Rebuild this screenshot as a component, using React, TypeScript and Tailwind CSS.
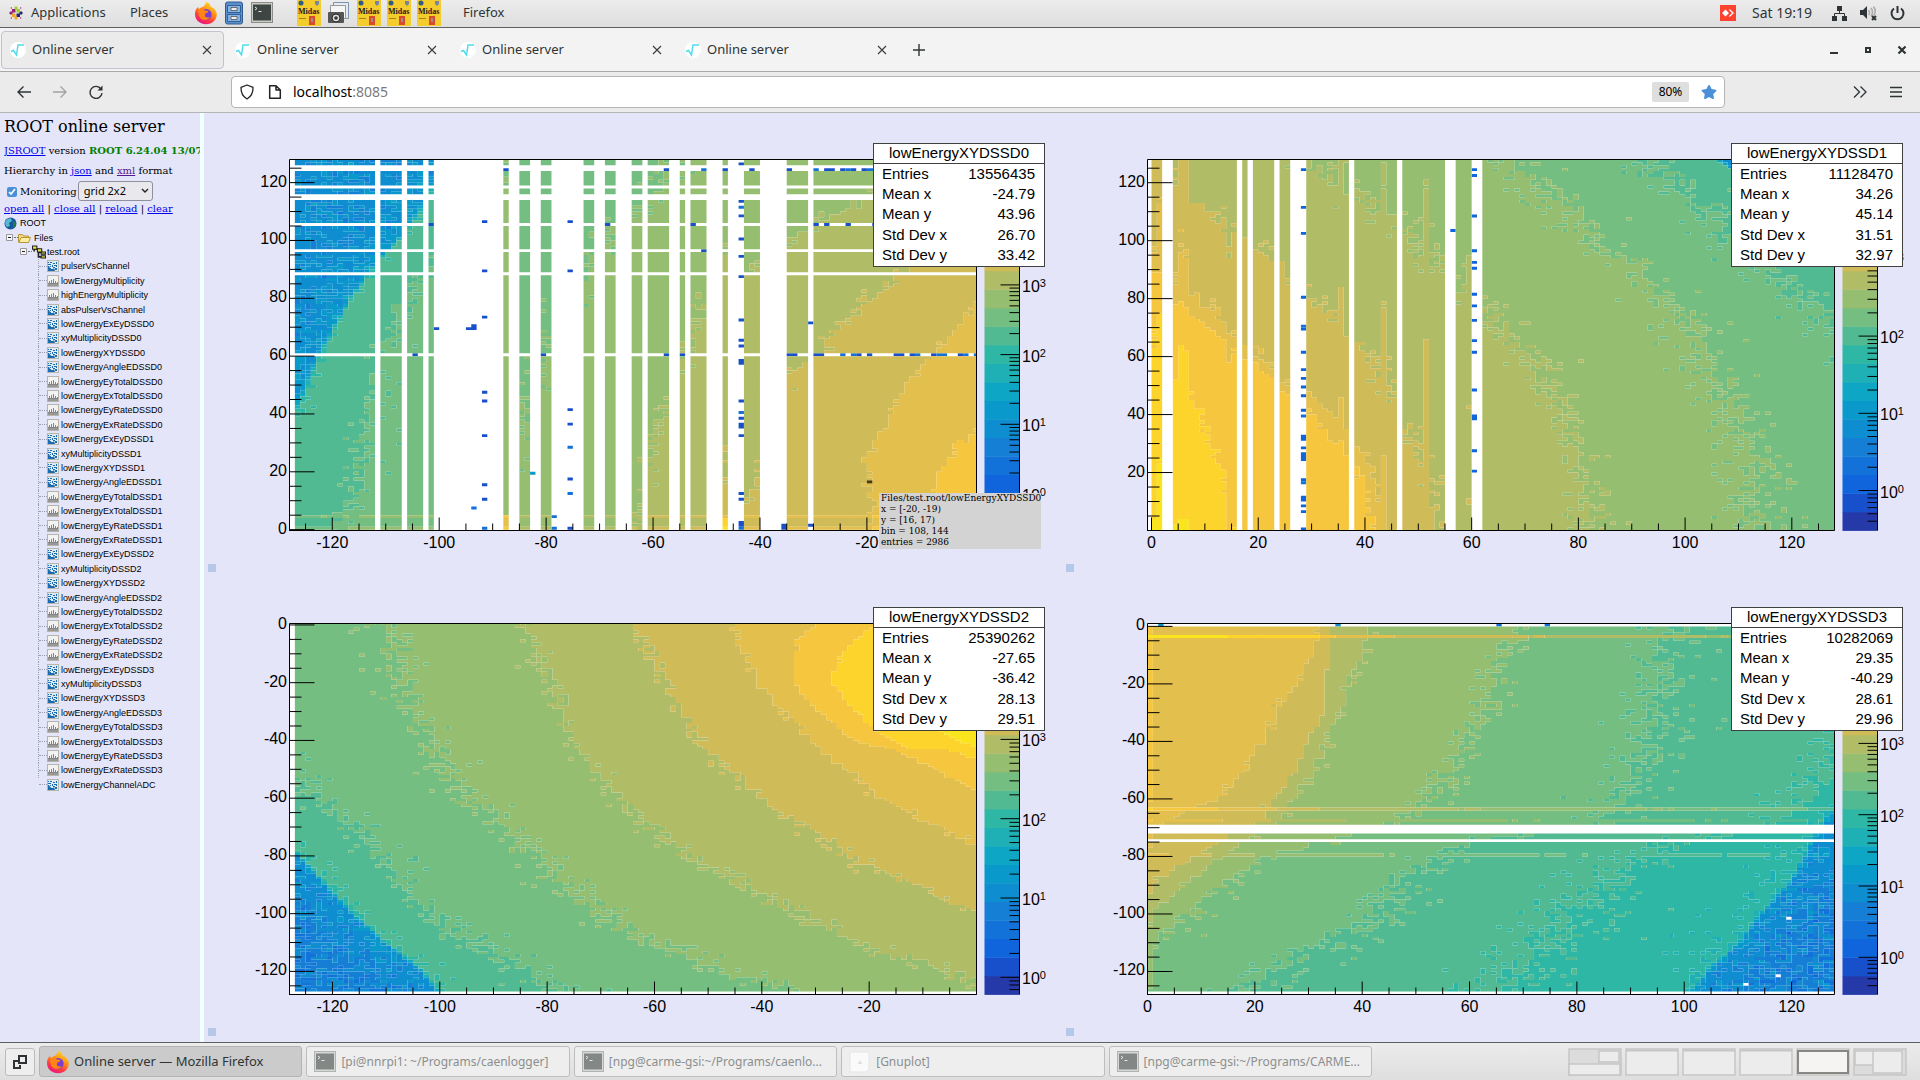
import React from "react";
import { FaStar } from "react-icons/fa";

type Curve = [number, [number, number][]];

type Plot = {
  name: string;
  stats: [string, string][];
  x: [number, number];
  y: [number, number];
  // pixel position of 10^0 on the palette and the height of one decade
  z: [number, number];
  curves: Curve[];
  blank: (x: number, y: number) => boolean;
  boost: (x: number, y: number) => number;
  dots: [number, number, number][];
};

const COLORS = [
  "#2639a8", "#1850cb", "#1064dc", "#1372d9", "#157fd5", "#0f8dd1", "#0999cb",
  "#0da6c4", "#1eb0b4", "#2eb7a4", "#52ba93", "#74be81", "#96be70", "#b1bd66",
  "#d0bb59", "#e3bf4d", "#f6c63e", "#fdd42c", "#fae41d", "#f9fb0e",
];

// drawing frame inside one pad
const LEFT = 85.5;
const RIGHT = 772.5;
const TOP = 45.5;
const BOTTOM = 416.5;
const BAND = (BOTTOM - TOP) / 20;

const shift = (pts: [number, number][], d: number) =>
  pts.map(([y, x]) => [y, x + d] as [number, number]);

const column = (x: number, level: number, ys: number[]) =>
  ys.map((y) => [x, y, level] as [number, number, number]);
const row = (y: number, level: number, xs: number[]) =>
  xs.map((x) => [x, y, level] as [number, number, number]);

const edge0: [number, number][] = [[0, -140], [36, -129], [46, -126], [60, -123], [70, -120], [80, -117], [90, -113], [100, -108], [110, -104], [128, -99]];
const edge1: [number, number][] = [[0, 190], [60, 150], [92, 130], [120, 113], [128, 106]];
const edge2: [number, number][] = [[-127, -101], [-120, -104], [-110, -111], [-100, -117], [-90, -122], [-80, -127], [0, -180]];
const edge3: [number, number][] = [[-127, 101], [-120, 104], [-110, 110], [-100, 114], [-90, 119], [-80, 122], [-70, 125], [-60, 129], [0, 170]];

const skipX0 = [-128, -112, -107, -103, -87, -86, -83, -82, -71, -70, -67, -66, -65, -62, -57, -56, -54, -50, -49, -48, -46, -45, -44, -40, -39, -38, -37, -36, -31];
const skipY0 = [124, 125, 118, 114, 115, 105, 96, 88, 60];
const skipX1 = [-1, 2, 3, 16, 18, 23, 26, 27, 28, 37, 46, 55, 56, 60, 61];
const skipY3 = [0, -70, -71, -72, -75, -128];

const plots: Plot[] = [
  {
    name: "lowEnergyXYDSSD0",
    stats: [["Entries", "13556435"], ["Mean x", "-24.79"], ["Mean y", "43.96"], ["Std Dev x", "26.70"], ["Std Dev y", "33.42"]],
    x: [-128, 0.5],
    y: [-0.3, 128],
    z: [380, 69.7],
    curves: [
      [5.5, shift(edge0, -8)],
      [6.2, edge0],
      [10.1, shift(edge0, 1)],
      [11, [[0, -118], [20, -115], [45, -113], [60, -112], [70, -109], [80, -107], [88, -103], [100, -98], [128, -90]]],
      [12, [[0, -90], [40, -85], [60, -79], [80, -74], [100, -69], [110, -64], [120, -58], [128, -54]]],
      [13, [[0, -63], [30, -60], [60, -54], [80, -50], [90, -42], [100, -34], [110, -24], [120, -14], [128, -5]]],
      [14, [[0, -45], [20, -40], [40, -37], [55, -34], [60, -29], [70, -25], [80, -19], [86, -15], [105, 0], [128, 12]]],
      [15, [[0, -19], [8, -19], [23, -20], [34, -17], [46, -14], [57, -9], [74, -1], [90, 5], [128, 18]]],
      [16, [[0, -7], [18, -7], [23, -5], [29, -3], [33, 0], [60, 8], [128, 25]]],
    ],
    blank: (x, y) => skipX0.includes(x) || (x >= -101 && x <= -89) || (x >= -79 && x <= -74) || skipY0.includes(y),
    boost: (x, y) =>
      (y === 4 || y === 0 ? 1 : 0) +
      (x === -88 ? (y < 5 ? 3.8 : 0.9) : 0) +
      (x === -47 ? (y < 4 ? 4 : 0.3) : 0),
    dots: [
      ...column(-92, 1, [106, 89, 73, 47, 44, 32, 15, 10]),
      ...column(-76, 1, [106, 89, 41, 36, 17, 0]),
      ...column(-76, 3, [28, 12]),
      ...column(-94, 1, [69, 70]),
      ...column(-79, 3, [4, 0]),
      ...column(-44, 1, [126, 113, 108, 100, 94, 87, 72, 65, 63, 58, 57, 44, 38, 36, 35, 32, 12, 10, 2, 1]),
      ...column(-44, 3, [111, 40, 0]),
      ...column(-36, 1, [0, 1]),
      ...column(-31, 1, [71, 1]),
      ...row(124, 1, [-88, -58, -47, -42, -35, -28, -27, -25, -23, -21]),
      ...row(124, 3, [-51, -30, -24, -20, -19]),
      ...row(105, 1, [-102, -69, -53, -30, -28, -24, -19]),
      ...row(60, 1, [-105, -81, -58, -55, -35, -34, -30, -29, -22, -20, -15, -14, -12, -8, -3]),
      ...row(60, 3, [-25, -23, -11, -7, -6, -2, 0]),
      [-95, 69, 1], [-101, 69, 1], [-94, 7, 3], [-92, 0, 3], [-83, 19, 6], [-51, 96, 1],
    ],
  },
  {
    name: "lowEnergyXYDSSD1",
    stats: [["Entries", "11128470"], ["Mean x", "34.26"], ["Mean y", "45.14"], ["Std Dev x", "31.51"], ["Std Dev y", "32.97"]],
    x: [-0.75, 128],
    y: [0, 128],
    z: [376.5, 77.2],
    curves: [
      [18, [[0, 6], [3, 3], [5, -4], [128, -40]]],
      [17, [[0, 15], [20, 13.5], [30, 11], [40, 9], [50, 5.5], [55, 3], [70, 0], [128, -30]]],
      [16, [[0, 42], [10, 41], [20, 39.5], [30, 34.5], [40, 30], [46, 26], [55, 21], [60, 17], [68, 12], [75, 6], [80, 3], [90, 0], [128, -20]]],
      [15, [[0, 43.5], [15, 42], [25, 40], [35, 36], [45, 31], [50, 25], [57, 22], [62, 18], [70, 14], [75, 11], [80, 8], [85, 4], [95, 0], [128, -10]]],
      [14, [[0, 53], [10, 52], [20, 51], [30, 49], [35, 47], [45, 44.5], [50, 43], [60, 41], [65, 38], [72, 34], [80, 30], [85, 26], [95, 22], [100, 17], [105, 13], [115, 7], [120, 4], [128, 1]]],
      [13, [[0, 82], [20, 81], [30, 79], [40, 77], [55, 73], [60, 71], [65, 67], [75, 63], [80, 60], [85, 57], [90, 54], [100, 49], [105, 47], [112, 43], [115, 39], [120, 34], [128, 28]]],
      [12, [[0, 112], [20, 112], [30, 111], [40, 109], [50, 106], [60, 104], [70, 101], [80, 96], [85, 94], [90, 91], [95, 87], [100, 83], [110, 80], [115, 75], [120, 71], [128, 66]]],
      [10.4, shift(edge1, -1)],
      [6, edge1],
    ],
    blank: (x) => skipX1.includes(x),
    boost: (x) => ({ 1: 0.5, 5: 0.3, 6: 0.3, 14: -0.3, 35: 0.3, 43: 0.35, 51: 0.45, 59: 0.2 } as Record<number, number>)[x] ?? 0,
    dots: [
      ...column(28, 2, [124, 111, 102, 80, 69, 61, 55, 52, 49, 46, 41, 32, 31, 28, 26, 25, 24, 17, 11, 10, 8, 6, 0]),
      ...column(28, 3, [70, 39, 16]),
      ...column(60, 2, [124, 122, 108, 96, 92, 90, 81, 77, 72, 65, 61, 48, 39, 38, 27, 20]),
      [56, 103, 2],
    ],
  },
  {
    name: "lowEnergyXYDSSD2",
    stats: [["Entries", "25390262"], ["Mean x", "-27.65"], ["Mean y", "-36.42"], ["Std Dev x", "28.13"], ["Std Dev y", "29.51"]],
    x: [-128, 0],
    y: [-128, 0.5],
    z: [399.3, 79.3],
    curves: [
      [4.6, shift(edge2, -14)],
      [5.7, edge2],
      [10, shift(edge2, 1)],
      [11, [[-127, -79], [-120, -86], [-110, -96], [-100, -103], [-90, -107], [-80, -112], [-70, -117], [-60, -123], [-50, -128], [0, -150]]],
      [12, [[-127, -34], [-120, -47], [-110, -61], [-100, -70], [-80, -82], [-60, -95], [-40, -102], [-20, -107], [0, -110]]],
      [13, [[-127, 4], [-120, -6], [-110, -23], [-100, -34], [-80, -54], [-60, -67], [-40, -75], [-20, -79], [0, -84]]],
      [14, [[-127, 35], [-110, 13], [-100, 0], [-90, -12], [-80, -24], [-60, -41], [-40, -52], [-20, -58], [0, -63]]],
      [15, [[-127, 60], [-100, 26], [-77, 0], [-60, -18], [-40, -31], [-20, -41], [-8, -44], [0, -45]]],
      [16, [[-127, 80], [-80, 26], [-58, 0], [-45, -14], [-40, -23], [-30, -30], [-20, -34], [-5, -33], [0, -30]]],
      [17, [[-127, 90], [-60, 26], [-44, -5], [-43, -13], [-38, -18], [-30, -23], [-20, -27], [-10, -25], [-5, -22], [0, -18]]],
      [18, [[-127, 95], [-60, 36], [-43, 0], [-39, -5], [-35, -9], [-20, -12], [0, -5]]],
    ],
    blank: (x, y) => x === -128 || y === -128,
    boost: () => 0,
    dots: [],
  },
  {
    name: "lowEnergyXYDSSD3",
    stats: [["Entries", "10282069"], ["Mean x", "29.35"], ["Mean y", "-40.29"], ["Std Dev x", "28.61"], ["Std Dev y", "29.96"]],
    x: [0, 128],
    y: [-128, 1],
    z: [379.3, 71.3],
    curves: [
      [15, [[-127, -50], [-80, -8], [-68, 4], [-60, 14], [-50, 18], [-40, 22], [-30, 24], [-20, 28], [-10, 31], [0, 32]]],
      [14, [[-127, -30], [-100, -8], [-90, 1], [-85, 5], [-80, 9], [-75, 14], [-68, 21], [-60, 24], [-50, 28], [-40, 30], [-30, 33], [0, 34]]],
      [13, [[-127, -20], [-110, -6], [-100, 1], [-90, 7], [-80, 14], [-75, 18], [-70, 24], [-60, 27], [-50, 31], [-40, 33], [-30, 35], [-20, 37], [-10, 40], [0, 42]]],
      [12, [[-127, -12], [-110, 1], [-100, 7], [-90, 14], [-80, 22], [-75, 33], [-68, 46], [-60, 52], [-50, 56], [-40, 59], [-30, 62], [-20, 64], [-10, 66], [0, 69]]],
      [11, [[-127, 19], [-120, 22], [-110, 33], [-105, 39], [-100, 43], [-90, 46], [-80, 53], [-75, 63], [-70, 82], [-60, 88], [-50, 92], [-40, 93], [-20, 95], [0, 97]]],
      [10, [[-127, 64], [-120, 69], [-110, 75], [-100, 78], [-90, 85], [-80, 91], [-75, 101], [-70, 116], [-60, 124], [-50, 128], [-40, 132], [0, 140]]],
      [9.1, edge3],
      [5.8, shift(edge3, 1)],
      [4.6, shift(edge3, 12)],
    ],
    blank: (_x, y) => skipY3.includes(y),
    boost: (x, y) =>
      (({ "-4": 2.2, "-64": 1.3, "-68": 0.6, "-80": 0.7 } as Record<string, number>)[y] ?? 0) +
      (x === 0 ? 0.4 : 0),
    dots: [
      [2, 0, 6], [35, 0, 5], [65, 0, 3], [74, 0, 3],
      [119, -102, -1], [117, -122, -1], [111, -125, -1],
    ],
  },
];

const hash = (a: number, b: number, c: number) => {
  let h = (a * 374761393 + b * 668265263 + c * 1442695041) | 0;
  h = Math.imul(h ^ (h >>> 13), 1274126177);
  h = Math.imul(h ^ (h >>> 16), 2246822519);
  return ((h ^ (h >>> 15)) >>> 0) / 4294967296;
};

const gauss = (x: number, y: number, seed: number) =>
  Math.sqrt(-2 * Math.log(hash(x, y, seed) + 1e-9)) *
  Math.cos(2 * Math.PI * hash(x, y, seed + 50));

const interpolate = (pts: [number, number][], v: number) => {
  if (v <= pts[0][0]) return pts[0][1];
  for (let i = 1; i < pts.length; i++) {
    if (v <= pts[i][0]) {
      const [a, b] = [pts[i - 1], pts[i]];
      return a[1] + ((b[1] - a[1]) * (v - a[0])) / (b[0] - a[0]);
    }
  }
  return pts[pts.length - 1][1];
};

const cellPaths = (plot: Plot, seed: number) => {
  const sx = (RIGHT - LEFT) / (plot.x[1] - plot.x[0]);
  const sy = (BOTTOM - TOP) / (plot.y[1] - plot.y[0]);
  const px = (x: number) => Math.min(RIGHT, Math.max(LEFT, LEFT + (x - plot.x[0]) * sx));
  const py = (y: number) => Math.min(BOTTOM, Math.max(TOP, BOTTOM - (y - plot.y[0]) * sy));
  const paths: string[] = COLORS.map(() => "");
  const special = new Map(plot.dots.map(([x, y, l]) => [`${x},${y}`, l]));
  const perBand = BAND / plot.z[1];
  const zMin = (plot.z[0] - BOTTOM) / plot.z[1];

  const levelAt = (x: number, y: number) => {
    const dot = special.get(`${x},${y}`);
    if (dot !== undefined) return dot;
    if (plot.blank(x, y)) return -1;
    const cx = x + 0.5;
    const at = plot.curves.map(([v, pts]) => [interpolate(pts, y), v]);
    const last = at.length - 1;
    let v = cx <= at[0][0] ? at[0][1] : at[last][1];
    if (cx <= at[0][0] && at[0][1] > 14) v += Math.min(0.9, (at[0][0] - cx) / 20);
    if (cx > at[last][0] && at[last][1] > 14) v += Math.min(0.9, (cx - at[last][0]) / 20);
    for (let i = 0; i < last; i++) {
      if (cx > at[i][0] && cx <= at[i + 1][0]) {
        v = at[i][1] + ((at[i + 1][1] - at[i][1]) * (cx - at[i][0])) / (at[i + 1][0] - at[i][0]);
      }
    }
    v += plot.boost(x, y);
    const entries = Math.pow(10, zMin + v * perBand);
    v += (gauss(x, y, seed) * 0.434) / Math.sqrt(entries) / perBand;
    return Math.max(1, Math.min(19, Math.floor(v)));
  };

  for (let x = Math.floor(plot.x[0]); x < plot.x[1]; x++) {
    let start = Math.floor(plot.y[0]);
    let current = levelAt(x, start);
    for (let y = start + 1; y <= plot.y[1] + 1; y++) {
      const next = y < plot.y[1] ? levelAt(x, y) : -2;
      if (next === current) continue;
      if (current >= 0) {
        const x1 = px(x).toFixed(2);
        const x2 = px(x + 1).toFixed(2);
        const y1 = py(start).toFixed(2);
        const y2 = py(y).toFixed(2);
        paths[current] += `M${x1} ${y1}H${x2}V${y2}H${x1}Z`;
      }
      start = y;
      current = next;
      if (next === -2) break;
    }
  }
  return paths;
};

const range = (from: number, to: number, step: number) => {
  const out: number[] = [];
  for (let v = Math.ceil(from / step) * step; v <= to; v += step) out.push(v);
  return out;
};

const Pad: React.FC<{ plot: Plot; seed: number; children?: React.ReactNode }> = ({ plot, seed, children }) => {
  const px = (x: number) => LEFT + ((x - plot.x[0]) * (RIGHT - LEFT)) / (plot.x[1] - plot.x[0]);
  const py = (y: number) => BOTTOM - ((y - plot.y[0]) * (BOTTOM - TOP)) / (plot.y[1] - plot.y[0]);
  const decades = [0, 1, 2, 3, 4, 5].filter((d) => plot.z[0] - d * plot.z[1] > TOP);
  let ticks = "";
  range(plot.x[0], plot.x[1], 5).forEach((x) => {
    ticks += `M${px(x)} ${BOTTOM}v${x % 20 === 0 ? -13 : -7}`;
  });
  range(plot.y[0], plot.y[1], 5).forEach((y) => {
    ticks += `M${LEFT} ${py(y)}h${y % 20 === 0 ? 25 : 12}`;
  });
  [-1, ...decades].forEach((d) => {
    for (let m = 1; m < 10; m++) {
      const y = plot.z[0] - (d + Math.log10(m)) * plot.z[1];
      if (y < BOTTOM && y > TOP) ticks += `M815.5 ${y}h${m === 1 ? -19 : -10}`;
    }
  });

  return (
    <section className="relative">
      <svg viewBox="0 0 858 464" className="block w-full h-auto font-['Liberation_Sans',Arial,sans-serif]" role="img" aria-label={plot.name}>
        <rect x={LEFT} y={TOP} width={RIGHT - LEFT} height={BOTTOM - TOP} fill="white" />
        {cellPaths(plot, seed).map((d, i) => d && <path key={i} d={d} fill={COLORS[i]} />)}
        {seed === 1 && <rect x={px(-20)} y={py(17)} width="5.4" height="2.9" fill="#4a3c16" />}
        <path d={`M${LEFT} ${BOTTOM + 0.5}V${TOP}H${RIGHT}V${BOTTOM}H${LEFT}`} fill="none" stroke="black" />
        {COLORS.map((c, i) => (
          <rect key={c} x="780.5" y={BOTTOM - (i + 1) * BAND} width="35" height={BAND + 0.4} fill={c} />
        ))}
        <path d={`M815.5 ${TOP}V${BOTTOM}`} stroke="black" />
        <path d={ticks} fill="none" stroke="black" />
        {range(plot.x[0], plot.x[1], 20).filter((x) => x !== 0 || plot.x[0] > -2).map((x) => (
          <text key={x} x={px(x)} y="434" fontSize="16" textAnchor="middle">{x === 0 ? 0 : x}</text>
        ))}
        {range(plot.y[0], plot.y[1], 20).filter((y) => y !== 0 || seed !== 2).map((y) => (
          <text key={y} x="83" y={py(y) + 4} fontSize="16" textAnchor="end">{y === 0 ? 0 : y}</text>
        ))}
        {decades.filter((d) => d < 4).map((d) => (
          <text key={d} x="818" y={plot.z[0] - d * plot.z[1] + 7} fontSize="16">
            10<tspan dy="-5" fontSize="11">{d}</tspan>
          </text>
        ))}
        <rect x="4" y="450" width="8" height="8" fill="#b5c8e8" />
      </svg>
      <div className="absolute top-[29px] right-[17px] w-[172px] h-[124px] border border-neutral-700 bg-white font-['Liberation_Sans',Arial,sans-serif] text-[15px] text-black">
        <h2 className="h-5 leading-[18px] text-center border-b border-neutral-700">{plot.name}</h2>
        <table className="w-full h-[101px] leading-5">
          <tbody>
            {plot.stats.map(([label, value]) => (
              <tr key={label}>
                <th className="p-0 pl-2 text-left font-normal">{label}</th>
                <td className="p-0 pr-[9px] text-right">{value}</td>
              </tr>
            ))}
          </tbody>
        </table>
      </div>
      {children}
    </section>
  );
};

const treeItems = [
  "pulserVsChannel", "lowEnergyMultiplicity", "highEnergyMultiplicity", "absPulserVsChannel",
  ...[0, 1, 2, 3].flatMap((n) =>
    ["ExEy", "xyMultiplicity", "XY", "AngleE", "EyTotal", "ExTotal", "EyRate", "ExRate"].map((k) =>
      k === "xyMultiplicity" ? `xyMultiplicityDSSD${n}` : `lowEnergy${k}DSSD${n}`
    )
  ),
  "lowEnergyChannelADC",
];

const HistIcon: React.FC<{ two: boolean }> = ({ two }) => (
  <svg width="12" height="12" viewBox="0 0 12 12" className="shrink-0">
    <rect width="12" height="12" fill="#b5b5ad" />
    <rect x="1" y="1" width="10" height="10" fill={two ? "#dcebf5" : "#f2f2f2"} />
    {two ? (
      <path d="M1 11V6h1l1 2h1v1h2l1-1 1 3zM3 2h2v1H3zM6 3h2v1H6zM1 4h3v1H1zM5 5h1v2H5zM7 5h3v1H7zM9 2h1v2H9zM8 8h2v2H8zM6 7h2v1H6zM3 6h1v1H3zM9 6h1v1H9zM1 2h1v1H1z" fill="#1b6cae" />
    ) : (
      <>
        <path d="M1 11V8h1V6h1v2h1V5h1v3h1V4h1v4h1V6h1v2h1V7h1v4z" fill="#858585" />
        <path d="M1 10h10" stroke="#aaa" />
      </>
    )}
  </svg>
);

const Minus = () => (
  <svg width="9" height="9" viewBox="0 0 9 9" className="shrink-0">
    <path d="M1.5 1.5h6v6h-6z" fill="#f4f4fa" stroke="#999" />
    <path d="M3 4.5h3" stroke="#222" />
  </svg>
);

const Sidebar = () => (
  <aside className="w-[204px] shrink-0 overflow-hidden border-r-4 border-[#f0ffff] pl-1 font-['DejaVu_Serif',serif] text-[10px] text-black whitespace-nowrap">
    <h1 className="mt-1 text-base leading-5">ROOT online server</h1>
    <p className="mt-2 leading-3 overflow-hidden">
      <a href="#jsroot" className="text-[#0000ee] underline">JSROOT</a> version{" "}
      <b className="text-[#008000]">ROOT 6.24.04 13/07/2021</b>
    </p>
    <p className="mt-2 leading-3">
      Hierarchy in <a href="#json" className="text-[#0000ee] underline">json</a> and{" "}
      <a href="#xml" className="text-[#551a8b] underline">xml</a> format
    </p>
    <div className="mt-1 flex h-5 items-center">
      <label className="flex items-center gap-[3px]">
        <input type="checkbox" defaultChecked className="ml-[3px] mt-[2px] size-[10px] accent-[#4a90d9]" />
        Monitoring
      </label>
      <span className="relative ml-px">
        <select aria-label="Layout" className="block h-5 w-[75px] appearance-none rounded-[3px] border border-[#8f8f9d] bg-[#e9e9ed] pl-[5px] font-['Noto_Sans',sans-serif] text-[11px] leading-4">
          <option>grid 2x2</option>
        </select>
        <svg width="8" height="6" viewBox="0 0 8 6" className="pointer-events-none absolute top-[7px] right-1">
          <path d="M1 1l3 3 3-3" fill="none" stroke="#222" strokeWidth="1.4" />
        </svg>
      </span>
    </div>
    <p className="mt-[2px] leading-3">
      <a href="#open" className="text-[#0000ee] underline">open all</a> |{" "}
      <a href="#close" className="text-[#0000ee] underline">close all</a> |{" "}
      <a href="#reload" className="text-[#0000ee] underline">reload</a> |{" "}
      <a href="#clear" className="text-[#0000ee] underline">clear</a>
    </p>
    <ul className="mt-px grid h-[576px] auto-rows-fr font-['Liberation_Sans',Arial,sans-serif] text-[9px] leading-3">
      <li className="flex items-center gap-[3px]">
        <svg width="13" height="13" viewBox="0 0 13 13">
          <circle cx="6.5" cy="6.5" r="6" fill="#17579f" />
          <path d="M1.5 4Q4 .5 7 1.5L8 4 5 6l1 3-3 1Q.5 8 1.5 4z" fill="#58b9cf" />
          <path d="M9 4l3 2-1 4-2 1z" fill="#237f43" />
        </svg>
        <a href="#root">ROOT</a>
      </li>
      <li className="flex items-center pl-[1px]">
        <Minus />
        <span className="w-1 border-t border-dotted border-gray-500" />
        <svg width="13" height="12" viewBox="0 0 13 12" className="mr-[3px]">
          <path d="M.5 10V2.5h4l1 1.500h5V10z" fill="#f6dc7a" stroke="#b9953a" />
          <path d="M1 10.500l2-5h9.500l-2 5z" fill="#fdeea0" stroke="#b9953a" />
        </svg>
        <a href="#files">Files</a>
      </li>
      <li className="flex items-center pl-[15px]">
        <Minus />
        <span className="w-1 border-t border-dotted border-gray-500" />
        <svg width="14" height="14" viewBox="0 0 13 13" className="mr-px">
          <path d="M2 2v4M2 4h4v7h4M6 7h4" fill="none" stroke="#222" strokeWidth="1.500" />
          <path d="M.5 1h4v3h-4zM5 3.500h4v3H5zM8.500 6.500h4v2h-4zM8.500 10h4v2h-4z" fill="#e6e04a" stroke="#222" />
        </svg>
        <a href="#test">test.root</a>
      </li>
      {treeItems.map((name, i) => (
        <li key={name} className="flex items-center pl-[34px]">
          <span className={`flex items-center self-stretch ${i < treeItems.length - 1 ? "border-l border-dotted border-gray-400" : ""}`}>
            <span className={`w-2 border-t border-dotted border-gray-400 ${i < treeItems.length - 1 ? "" : "ml-px"}`} />
          </span>
          <HistIcon two={!/Total|Rate|EnergyMult/.test(name)} />
          <a href={`#${name}`} className="ml-[2px]">{name}</a>
        </li>
      ))}
    </ul>
  </aside>
);

const FirefoxIcon: React.FC<{ id: string }> = ({ id }) => (
  <svg width="24" height="24" viewBox="0 0 24 24" className="shrink-0">
    <defs>
      <linearGradient id={id} x1="0.8" y1="0" x2="0.3" y2="1">
        <stop offset="0" stopColor="#ffe226" />
        <stop offset=".45" stopColor="#ff8a16" />
        <stop offset=".75" stopColor="#ff3647" />
        <stop offset="1" stopColor="#e31587" />
      </linearGradient>
    </defs>
    <path d="M12.500 1c3 1 4 3 4 4.500C20 7 23 10 22.800 14c-.4 5.500-5 9.300-10.600 9.300C6 23.300 1 19 1 13c0-3 1-5.500 3-7l.8 2L7 6.500c2-.5 4-2 5.500-5.500z" fill={`url(#${id})`} />
    <circle cx="12" cy="13.500" r="5.600" fill="#7a3fd0" />
    <path d="M4.500 8.500c2-1.500 5-1 6.500 1 1.500.3 3 .3 3.500 1-1 1.500-3 1.500-3.500 3-1 2.500 2 4 5 2.500-2 4-8.500 4-10.500 0C4 13.500 4 10.500 4.500 8.500z" fill="#ff8518" />
  </svg>
);

const TerminalIcon: React.FC<{ faded?: boolean }> = ({ faded }) => (
  <svg width="22" height="22" viewBox="0 0 22 22" className={faded ? "shrink-0 opacity-60" : "shrink-0"}>
    <rect x=".5" y=".5" width="21" height="20" fill="#c9ccc7" stroke="#8a8c88" />
    <rect x="2" y="2.500" width="18" height="16" fill="#3d4643" />
    <path d="M4 5l2 1.500L4 8M7.500 9.500h3" fill="none" stroke="#e5e5e5" />
  </svg>
);

const MidasIcon = () => (
  <svg width="24" height="26" viewBox="0 0 24 26" className="shrink-0">
    <rect width="24" height="26" fill="#f4cc2c" />
    <circle cx="4" cy="3" r="2.500" fill="#2d5c84" />
    <path d="M18 1h4v3l-2 2-2-2z" fill="#7785a0" />
    <rect x="12" y="16" width="6" height="9" fill="#d64b2b" />
    <rect x="14" y="18" width="2" height="4" fill="#a88" />
    <path d="M2 18.500h7" stroke="#9b8427" />
    <text x="1" y="14" fontFamily="Liberation Serif" fontWeight="bold" fontSize="8" fill="#222">Midas</text>
  </svg>
);

const tabs = ["t1", "t2", "t3", "t4"];

const TopPanel = () => (
  <header className="flex h-7 items-center border-b border-[#606060] bg-linear-to-b from-[#ececec] to-[#dedede] pb-px pl-2 pr-[15px] text-[13px] text-[#2e3436]">
    <svg width="16" height="16" viewBox="0 0 16 16">
      <path d="M4 4h3.500v3.500H4z" fill="#932279" /><path d="M8.500 4H12v3.500H8.500z" fill="#9ccd2a" />
      <path d="M4 8.500h3.500V12H4z" fill="#efa724" /><path d="M8.500 8.500H12V12H8.500z" fill="#262577" />
      <path d="M8 1l2 2-2 2-2-2z" fill="#9ccd2a" /><path d="M1 8l2-2 2 2-2 2z" fill="#932279" />
      <path d="M15 8l-2-2-2 2 2 2z" fill="#262577" /><path d="M8 15l2-2-2-2-2 2z" fill="#efa724" />
      <path d="M2 3l2-1v2zM14 3l-2-1v2zM2 13l2 1v-2zM14 13l-2 1v-2z" fill="#c34b8c" />
    </svg>
    <button className="ml-[7px] w-[79px] text-left">Applications</button>
    <button className="ml-5 w-[42px] text-left">Places</button>
    <span className="ml-[22px] flex items-center gap-[7px]">
      <FirefoxIcon id="fxTop" />
      <svg width="18" height="24" viewBox="0 0 18 24" className="mr-px">
        <rect x=".5" y="1" width="17" height="22" rx="2" fill="#5d8fca" stroke="#2f5b93" />
        <path d="M2.500 4.500h13v7h-13zM2.500 13.500h13v7h-13z" fill="#86b2e3" stroke="#31609b" />
        <path d="M6 6.500h6v3H6zM6 15.500h6v3H6z" fill="#eee" stroke="#555" strokeWidth=".8" />
      </svg>
      <TerminalIcon />
    </span>
    <span className="ml-6 flex items-center gap-[6px]">
      <MidasIcon />
      <svg width="24" height="24" viewBox="0 0 24 24">
        <path d="M6.500 1.500h15v16h-15z" fill="#e6ebf1" stroke="#7b93b2" />
        <path d="M3.500 4.500h15v13h-15z" fill="#f5f5f5" stroke="#999" />
        <rect x="1" y="11" width="16" height="11" rx="1" fill="#555" />
        <circle cx="9" cy="17" r="4" fill="#ddd" stroke="#222" /><circle cx="9" cy="17" r="1.800" fill="#333" />
      </svg>
      <MidasIcon /><MidasIcon /><MidasIcon />
    </span>
    <button className="ml-[22px]">Firefox</button>
    <svg width="16" height="16" viewBox="0 0 16 16" className="ml-auto">
      <rect width="16" height="16" fill="#ff4130" />
      <path d="M5.500 4.500L9 8l-3.500 3.500L2 8zM8.500 4.500h1.800L14 8l-3.700 3.500H8.500L12 8z" fill="white" />
    </svg>
    <time className="ml-4 text-sm">Sat 19:19</time>
    <svg width="16" height="16" viewBox="0 0 16 16" className="ml-5">
      <path d="M5 1h5v5H5zM0 11h5v5H0zM10 11h5v5h-5z" fill="#2e3436" />
      <path d="M7.500 6v2.500M2.500 11V8.500h10V11" fill="none" stroke="#2e3436" />
    </svg>
    <svg width="18" height="16" viewBox="0 0 18 16" className="ml-3">
      <path d="M0 5h3l4-4v13l-4-4H0z" fill="#2e3436" />
      <path d="M8.500 5q2 2.500 0 5M11 3q3 4 0 8M13.500 1.500q3.500 5 0 9" fill="none" stroke="#aaa" strokeWidth="1.500" />
      <path d="M12 11l4 4M16 11l-4 4" stroke="#2e3436" strokeWidth="2" />
    </svg>
    <svg width="15" height="15" viewBox="0 0 15 15" className="ml-3">
      <path d="M4 2.500a6 6 0 1 0 7 0M7.500 0v7" fill="none" stroke="#2e3436" strokeWidth="2" />
    </svg>
  </header>
);

const BrowserTabs = () => (
  <div className="flex h-11 items-center border-b border-[#a9a9a9] bg-[#f3f3f3] pl-[1px] text-[13px] text-[#2e3436]" role="tablist">
    {tabs.map((id, i) => (
      <div
        key={id}
        className={`mr-[2px] flex h-[38px] w-[223px] items-center rounded-[4px] border pl-2 pr-[10px] ${
          i === 0 ? "border-[#c3c3cd] bg-[#ebebeb]" : "border-transparent"
        }`}
      >
        <svg width="16" height="16" viewBox="0 0 16 16">
          <circle cx="8" cy="8" r="8" fill="white" />
          <path d="M1 9.500l2.500-1 3 4.500L8 3h6" fill="none" stroke="#4fdcec" strokeWidth="1.500" />
        </svg>
        <button role="tab" aria-selected={i === 0} className="ml-[6px] flex-1 text-left">Online server</button>
        <button aria-label="Close tab">
          <svg width="12" height="12" viewBox="0 0 12 12">
            <path d="M2 2l8 8M10 2l-8 8" stroke="#3a3a3a" strokeWidth="1.100" />
          </svg>
        </button>
      </div>
    ))}
    <button aria-label="New tab" className="ml-3">
      <svg width="12" height="12" viewBox="0 0 12 12">
        <path d="M6 0v12M0 6h12" stroke="#2e3436" strokeWidth="1.400" />
      </svg>
    </button>
    <span className="ml-auto mr-[13px] flex gap-[24px]">
      <button aria-label="Minimize">
        <svg width="10" height="10" viewBox="0 0 10 10"><path d="M1 8h8" stroke="#2e3436" strokeWidth="2" /></svg>
      </button>
      <button aria-label="Restore">
        <svg width="10" height="10" viewBox="0 0 10 10"><path d="M3 3h4v4H3z" fill="none" stroke="#2e3436" strokeWidth="2" /></svg>
      </button>
      <button aria-label="Close">
        <svg width="10" height="10" viewBox="0 0 10 10"><path d="M1.500 1.500l7 7M8.500 1.500l-7 7" stroke="#2e3436" strokeWidth="2.200" /></svg>
      </button>
    </span>
  </div>
);

const NavBar = () => (
  <nav className="flex h-[41px] items-center border-b border-[#b5b5b5] bg-[#ebebeb] pl-4 pr-4 text-[#2e3436]">
    <button aria-label="Back">
      <svg width="16" height="16" viewBox="0 0 16 16"><path d="M15 8H2M7.500 2.500L2 8l5.500 5.500" fill="none" stroke="#2e3436" strokeWidth="1.400" /></svg>
    </button>
    <button aria-label="Forward" className="ml-5">
      <svg width="16" height="16" viewBox="0 0 16 16"><path d="M1 8h13M8.500 2.500L14 8l-5.500 5.500" fill="none" stroke="#a3a3a3" strokeWidth="1.400" /></svg>
    </button>
    <button aria-label="Reload" className="ml-5">
      <svg width="16" height="16" viewBox="0 0 16 16">
        <path d="M13 5A6 6 0 1 0 14 9" fill="none" stroke="#2e3436" strokeWidth="1.400" />
        <path d="M14.500 1.500v5h-5z" fill="#2e3436" />
      </svg>
    </button>
    <div className="ml-[127px] mr-[127px] flex h-8 flex-1 items-center rounded-[4px] border border-[#b5b5b5] bg-white pl-[7px]">
      <svg width="16" height="16" viewBox="0 0 16 16">
        <path d="M8 1l6 2.300q.3 8-6 11.700Q1.700 11.300 2 3.300z" fill="none" stroke="#222" strokeWidth="1.300" strokeLinejoin="round" />
      </svg>
      <svg width="16" height="16" viewBox="0 0 16 16" className="ml-3">
        <path d="M2.700 1.700H9l4.300 4.300v8.300H2.700zM9 2v4h4" fill="none" stroke="#222" strokeWidth="1.500" strokeLinejoin="round" />
      </svg>
      <label className="relative ml-[10px] flex-1 text-sm">
        <input aria-label="Address" defaultValue="localhost:8085" className="w-full text-transparent outline-none" />
        <span className="pointer-events-none absolute inset-0 text-black">localhost<span className="text-[#7b7b7b]">:8085</span></span>
      </label>
      <button className="h-5 w-[37px] rounded-[2px] bg-[#dedede] text-xs text-black">80%</button>
      <button aria-label="Bookmark" className="ml-3 mr-[7px] text-[#4a90d9]"><FaStar size={16} /></button>
    </div>
    <button aria-label="More tools">
      <svg width="16" height="16" viewBox="0 0 16 16"><path d="M2 2.500L7.500 8 2 13.500M8.500 2.500L14 8l-5.500 5.500" fill="none" stroke="#2e3436" strokeWidth="1.300" /></svg>
    </button>
    <button aria-label="Menu" className="ml-5">
      <svg width="16" height="16" viewBox="0 0 16 16"><path d="M2 3.500h12M2 8h12M2 12.500h12" stroke="#2e3436" strokeWidth="1.300" /></svg>
    </button>
  </nav>
);

const tasks = [
  { title: "[pi@nnrpi1: ~/Programs/caenlogger]", icon: "term" },
  { title: "[npg@carme-gsi:~/Programs/caenlo...", icon: "term" },
  { title: "[Gnuplot]", icon: "plot" },
  { title: "[npg@carme-gsi:~/Programs/CARME...", icon: "term" },
];

const TaskBar = () => (
  <footer className="flex h-[38px] items-center gap-1 border-t border-[#606060] bg-linear-to-b from-[#ececec] to-[#dedede] pl-[5px] pr-3 text-xs text-[#2e3436]">
    <button aria-label="Show desktop" className="flex h-7 w-[30px] items-center justify-center rounded-[3px] border border-[#bbb] bg-[#eee]">
      <svg width="14" height="14" viewBox="0 0 14 14">
        <path d="M6 1h7v7H6zM5 6H1v7h6v-3" fill="none" stroke="#2e3436" strokeWidth="2" />
      </svg>
    </button>
    <div className="grid w-[1333px] grid-cols-5 gap-1">
      <button className="flex h-[31px] items-center gap-1 rounded-[3px] border border-[#b3b3b3] bg-[#cbcbcb] pl-[6px] text-left text-[13px]">
        <FirefoxIcon id="fxTask" />
        Online server — Mozilla Firefox
      </button>
      {tasks.map((t) => (
        <button key={t.title} className="flex h-[31px] items-center gap-[5px] rounded-[3px] border border-[#bdbdbd] bg-[#eee] pl-[7px] text-left whitespace-nowrap text-[#8c8e8e]">
          {t.icon === "term" ? (
            <TerminalIcon faded />
          ) : (
            <svg width="22" height="22" viewBox="0 0 22 22" className="shrink-0">
              <path d="M1 1h19v17l-3 3H1z" fill="#fafafa" stroke="#e5e5e5" />
              <path d="M9 13l2-4 2 4z" fill="#ddd" />
            </svg>
          )}
          {t.title}
        </button>
      ))}
    </div>
    <svg width="340" height="28" viewBox="0 0 340 28" className="ml-auto" role="img" aria-label="Workspaces">
      {[0, 57, 114, 171, 228, 285].map((x, i) => (
        <g key={x}>
          <rect x={x + 1} y="1" width="52" height="26" fill={i === 0 || i === 5 ? "#dcdcdc" : "#ececec"} stroke="#c6c6c6" strokeWidth="1.500" />
          {i === 4 && <rect x={x + 2} y="3" width="50" height="22" fill="#f5f4f2" stroke="#878784" strokeWidth="2" />}
          {i > 0 && i < 4 && <path d={`M${x + 1} 2.500h52`} stroke="#c6c6c6" strokeWidth="2" />}
        </g>
      ))}
      <path d="M31 3h20v11H31zM1 16h51v11H1zM287 3h18v14h-18zM305 3h29v22h-29z" fill="#ececec" stroke="#c6c6c6" strokeWidth="1.500" />
    </svg>
  </footer>
);

export default function App() {
  return (
    <div className="flex min-h-screen flex-col bg-[#e5e5f9] font-['Noto_Sans',sans-serif]">
      <TopPanel />
      <BrowserTabs />
      <NavBar />
      <div className="flex flex-1">
        <Sidebar />
        <main className="grid flex-1 grid-cols-2 content-start pt-px">
          {plots.map((plot, i) => (
            <Pad key={plot.name} plot={plot} seed={i + 1}>
              {i === 0 && (
                <div className="absolute top-[379px] right-[21px] h-14 w-[162px] bg-[#d3d3d3] pl-[2px] font-['DejaVu_Serif',serif] text-[9px] leading-[11px] text-black whitespace-nowrap">
                  <p>Files/test.root/lowEnergyXYDSSD0</p>
                  <p>x = [-20, -19)</p>
                  <p>y = [16, 17)</p>
                  <p>bin = 108, 144</p>
                  <p>entries = 2986</p>
                </div>
              )}
            </Pad>
          ))}
        </main>
      </div>
      <TaskBar />
    </div>
  );
}
